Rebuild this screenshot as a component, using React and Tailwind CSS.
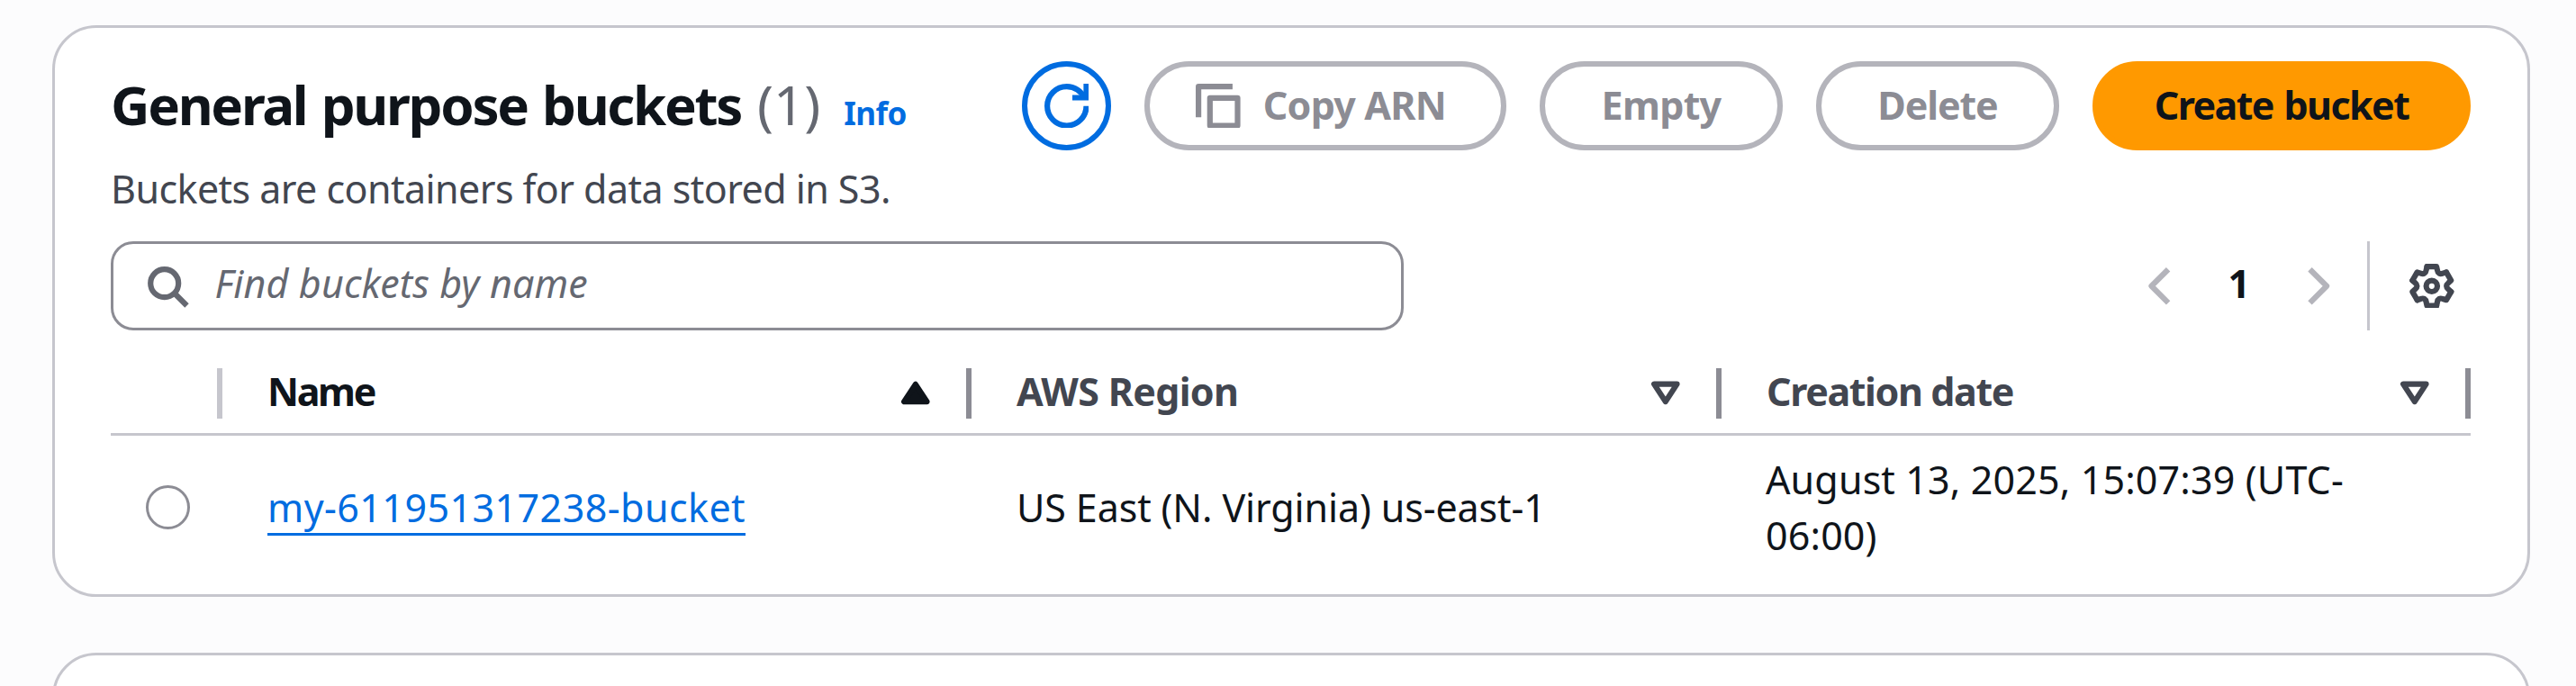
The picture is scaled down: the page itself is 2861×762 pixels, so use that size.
function Icon({ children, className = '' }) {
  return (
    <svg viewBox="0 0 16 16" className={`size-[49.6px] shrink-0 ${className}`} fill="none" stroke="currentColor" strokeWidth="2">
      {children}
    </svg>
  );
}

const GEAR_TOOTH = 'M-1.7 -7H1.7L2 -5.7C2.15 -4.6 2.91 -4.16 3.94 -4.58L5.21 -4.97';

function GearIcon() {
  return (
    <Icon>
      <g transform="translate(8 8)" strokeLinejoin="round" strokeLinecap="round">
        <path d={GEAR_TOOTH} />
        <path d={GEAR_TOOTH} transform="rotate(60)" />
        <path d={GEAR_TOOTH} transform="rotate(120)" />
        <path d={GEAR_TOOTH} transform="rotate(180)" />
        <path d={GEAR_TOOTH} transform="rotate(240)" />
        <path d={GEAR_TOOTH} transform="rotate(300)" />
        <circle r="2" />
      </g>
    </Icon>
  );
}

function SortIcon({ active }) {
  return (
    <Icon>
      {active ? (
        <path d="M3.9 11H12.1L8 4.8Z" fill="currentColor" strokeLinejoin="round" />
      ) : (
        <path d="M3.9 4.7H12.1L8 11Z" strokeLinejoin="round" />
      )}
    </Icon>
  );
}

function Button({ children, className = '' }) {
  return (
    <button className={`flex h-[99px] shrink-0 items-center justify-center rounded-full border-[6px] text-[43px] font-bold whitespace-nowrap ${className}`}>
      {children}
    </button>
  );
}

function HeaderCell({ label, active, className, labelClass }) {
  return (
    <div className={`flex h-full items-center justify-between pl-[50px] ${className}`}>
      <span className={`pb-[3px] text-[43px] font-bold ${active ? 'text-[#0f141a]' : 'text-[#424650]'} ${labelClass}`}>{label}</span>
      <div className={`flex items-center gap-[31px] ${active ? 'text-[#0f141a]' : 'text-[#424650]'}`}>
        <SortIcon active={active} />
        <span className="h-[56px] w-[6px] bg-[#8c8c94]" />
      </div>
    </div>
  );
}

export default function App() {
  return (
    <div className="flex h-[762px] w-[2861px] flex-col gap-[62px] overflow-hidden bg-[#fcfcfd] pt-[28px] pl-[58px] font-['Noto_Sans',sans-serif] text-[#0f141a]">
      <section className="h-[635px] w-[2752px] shrink-0 rounded-[49px] border-[3px] border-[#c6c6cd] bg-white pt-[37px] pr-[63px] pl-[62px]">
        <header className="flex h-[99px] items-center justify-between">
          <div className="flex items-baseline pt-[7px] leading-[99px]">
            <h2 className="text-[60px] font-bold tracking-[-2.3px] [word-spacing:3px]">General purpose buckets</h2>
            <span className="ml-[18px] text-[60px] text-[#656871]">(1)</span>
            <a className="ml-[26px] text-[35px] font-bold tracking-[-0.6px] text-[#006ce0]">Info</a>
          </div>
          <div className="flex gap-[37px]">
            <Button className="w-[99px] border-[#006ce0] text-[#006ce0]">
              <Icon>
                <path d="M10 5h5V0" />
                <path d="M15 8c0 3.87-3.13 7-7 7s-7-3.13-7-7 3.13-7 7-7c2.79 0 5.2 1.63 6.33 4" />
              </Icon>
            </Button>
            <Button className="w-[402px] gap-[25px] border-[#b4b4bb] pr-[10px] pb-px tracking-[-0.8px] text-[#8c8c94]">
              <Icon className="mt-px">
                <path d="M1 12V1h12.2" strokeLinejoin="round" />
                <path d="M5.1 5.1H15V15H5.1Z" strokeLinejoin="round" />
              </Icon>
              Copy ARN
            </Button>
            <Button className="w-[270px] border-[#b4b4bb] pb-px tracking-[-0.7px] text-[#8c8c94]">Empty</Button>
            <Button className="w-[270px] border-[#b4b4bb] pb-px tracking-[-1.1px] text-[#8c8c94]">Delete</Button>
            <Button className="w-[420px] border-[#ff9900] bg-[#ff9900] pb-px tracking-[-1.6px] [word-spacing:2px]">Create bucket</Button>
          </div>
        </header>

        <p className="mt-[12px] h-[62px] text-[43px] leading-[62px] tracking-[-0.56px] text-[#424650]">
          Buckets are containers for data stored in S3.
        </p>

        <div className="mt-[27px] flex h-[99px] items-center justify-between">
          <div className="flex h-[99px] w-[1436px] items-center gap-[28px] rounded-[25px] border-[3px] border-[#8c8c94] pl-[35px] text-[#656871]">
            <Icon>
              <circle cx="7" cy="7" r="5" />
              <path d="m15 15-4.5-4.5" />
            </Icon>
            <span className="pb-[4px] text-[43px] tracking-[0.14px] italic">Find buckets by name</span>
          </div>
          <div className="flex h-full items-center">
            <Icon className="text-[#b4b4bb]">
              <path d="M11 2 5 8l6 6" strokeLinejoin="round" />
            </Icon>
            <span className="w-[126px] pb-[4px] text-center text-[43px] font-bold">1</span>
            <Icon className="text-[#b4b4bb]">
              <path d="m5 2 6 6-6 6" strokeLinejoin="round" />
            </Icon>
            <span className="mr-[44px] ml-[30px] h-full w-[3px] bg-[#c6c6cd]" />
            <div className="mr-[18px] text-[#424650]">
              <GearIcon />
            </div>
          </div>
        </div>

        <div className="mt-[25px] flex h-[92px] w-[2621px] items-center border-b-[3px] border-[#c6c6cd]">
          <div className="flex w-[124px] justify-end">
            <span className="h-[56px] w-[6px] bg-[#c6c6cd]" />
          </div>
          <HeaderCell label="Name" active className="w-[832px]" labelClass="tracking-[-2.3px]" />
          <HeaderCell label="AWS Region" className="w-[833px]" labelClass="tracking-[-0.7px]" />
          <HeaderCell label="Creation date" className="w-[832px]" labelClass="tracking-[-1.4px]" />
        </div>

        <div className="flex h-[159px] w-[2621px] items-center text-[43px] leading-[62px]">
          <div className="w-[124px] pl-[39px]">
            <span className="block size-[49px] rounded-full border-[3px] border-[#8c8c94]" />
          </div>
          <div className="flex w-[832px] pl-[50px]">
            <a className="h-[62px] border-b-[3px] border-[#006ce0] tracking-[0.44px] text-[#006ce0]">my-611951317238-bucket</a>
          </div>
          <div className="w-[832px] pl-[50px] tracking-[-0.12px]">US East (N. Virginia) us-east-1</div>
          <div className="w-[833px] pl-[50px] tracking-[0.14px]">
            <p>August 13, 2025, 15:07:39 (UTC-</p>
            <p>06:00)</p>
          </div>
        </div>
      </section>
      <section className="h-[200px] w-[2752px] shrink-0 rounded-[49px] border-[3px] border-[#c6c6cd] bg-white" />
    </div>
  );
}
